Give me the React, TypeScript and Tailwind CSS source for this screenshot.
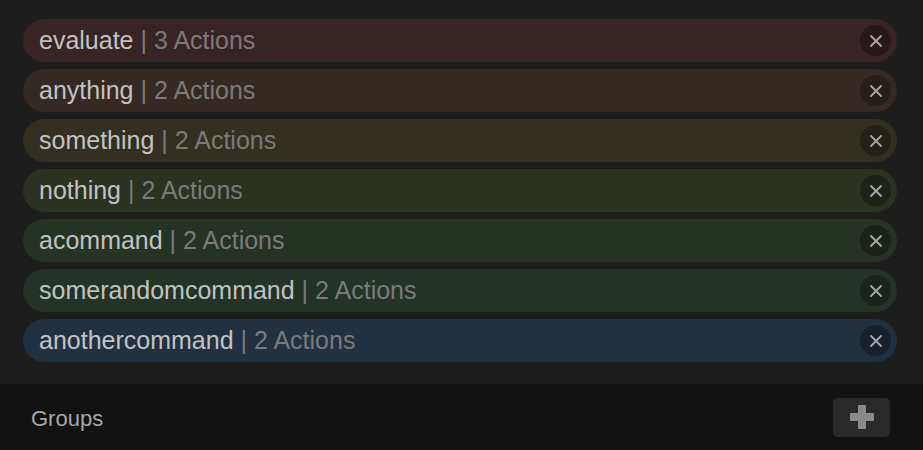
import React from "react";

const rows = [
  { name: "evaluate", count: 3, bg: "bg-[#382325]", btn: "bg-[#261819]" },
  { name: "anything", count: 2, bg: "bg-[#342a23]", btn: "bg-[#241d18]" },
  { name: "something", count: 2, bg: "bg-[#332f21]", btn: "bg-[#232017]" },
  { name: "nothing", count: 2, bg: "bg-[#2b3222]", btn: "bg-[#1d2218]" },
  { name: "acommand", count: 2, bg: "bg-[#263223]", btn: "bg-[#1a2218]" },
  { name: "somerandomcommand", count: 2, bg: "bg-[#243228]", btn: "bg-[#19221b]" },
  { name: "anothercommand", count: 2, bg: "bg-[#223142]", btn: "bg-[#17212c]" },
];

function CloseIcon() {
  return (
    <svg width="14" height="14" viewBox="0 0 14 14">
      <path d="M2 2 L12 12 M12 2 L2 12" stroke="#a9a9a9" strokeWidth="1.8" strokeLinecap="round" />
    </svg>
  );
}

export default function App() {
  return (
    <div className="w-[923px] h-[450px] flex flex-col bg-[#1d1d1d]" style={{ fontFamily: '"Liberation Sans", Arial, sans-serif' }}>
      <div className="h-[384px] flex flex-col gap-[7px] pt-[19px] pl-[23px] pr-[26px]">
        {rows.map((r) => (
          <div key={r.name} className={`h-[43px] rounded-full flex items-center justify-between pl-[16px] pr-[6px] ${r.bg}`}>
            <div className="text-[25px] leading-none whitespace-pre">
              <span className="text-[#c2c2c2]">{r.name}</span>
              <span className="text-[#7a7a7a]">{" | " + r.count + " Actions"}</span>
            </div>
            <div className={`w-[31px] h-[31px] rounded-full flex items-center justify-center ${r.btn}`}>
              <CloseIcon />
            </div>
          </div>
        ))}
      </div>
      <div className="flex-1 bg-[#111111] flex items-center justify-between pl-[31px] pr-[33px]">
        <span className="text-[22px] text-[#a6a6a6] leading-none pt-[3px]">Groups</span>
        <div className="w-[57px] h-[39px] rounded-[5px] bg-[#292929] flex items-center justify-center">
          <svg width="26" height="26" viewBox="0 0 26 26">
            <path d="M10 1 H16 Q17 1 17 2 V9 H24 Q25 9 25 10 V16 Q25 17 24 17 H17 V24 Q17 25 16 25 H10 Q9 25 9 24 V17 H2 Q1 17 1 16 V10 Q1 9 2 9 H9 V2 Q9 1 10 1 Z" fill="#8a8a8a" />
          </svg>
        </div>
      </div>
    </div>
  );
}
